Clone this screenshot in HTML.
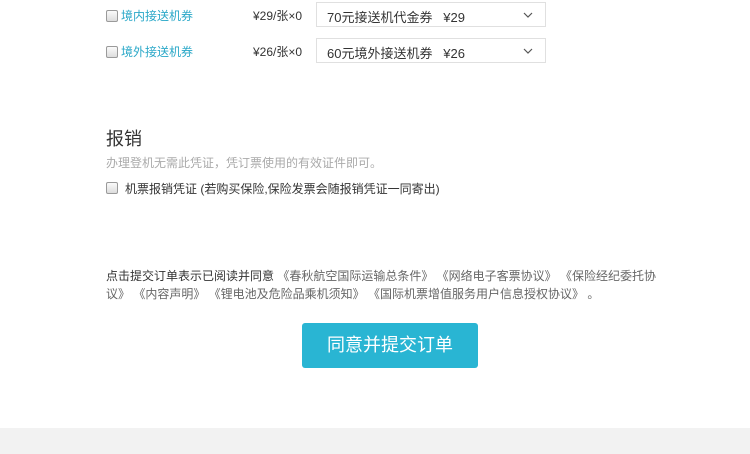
<!DOCTYPE html>
<html><head><meta charset="utf-8"><style>
*{margin:0;padding:0;box-sizing:border-box}
body{width:750px;height:454px;background:#fff;position:relative;overflow:hidden;font-family:"Liberation Sans","Noto Sans CJK SC",sans-serif;font-size:12px;color:#333}
.a{position:absolute;white-space:nowrap}
.cb{position:absolute;width:12px;height:12px;border:1px solid #9a9a9a;border-radius:2px;background:linear-gradient(#fafafa,#dcdcdc)}
.lbl{color:#2aa8c8}
.sel{position:absolute;width:230px;height:25px;border:1px solid #e0e0e0;background:#fff}
.sel span{position:absolute;left:10px;top:4px;font-size:13px;color:#333}
.sel svg{position:absolute;right:12px;top:9px}
</style></head><body>
<div class="cb" style="left:106px;top:10px"></div>
<div class="a lbl" style="left:121px;top:7px">境内接送机券</div>
<div class="a" style="left:253px;top:7px">¥29/张×0</div>
<div class="sel" style="left:316px;top:2px"><span>70元接送机代金券 &nbsp; ¥29</span><svg width="10" height="6"><path d="M1 1L5 5L9 1" stroke="#555" fill="none" stroke-width="1.2"/></svg></div>
<div class="cb" style="left:106px;top:46px"></div>
<div class="a lbl" style="left:121px;top:43px">境外接送机券</div>
<div class="a" style="left:253px;top:43px">¥26/张×0</div>
<div class="sel" style="left:316px;top:38px"><span>60元境外接送机券 &nbsp; ¥26</span><svg width="10" height="6"><path d="M1 1L5 5L9 1" stroke="#555" fill="none" stroke-width="1.2"/></svg></div>

<div class="a" style="left:106px;top:125px;font-size:18px;color:#333">报销</div>
<div class="a" style="left:106px;top:154px;color:#aaa">办理登机无需此凭证，凭订票使用的有效证件即可。</div>
<div class="cb" style="left:106px;top:182px"></div>
<div class="a" style="left:125px;top:180px">机票报销凭证 (若购买保险,保险发票会随报销凭证一同寄出)</div>

<div class="a" style="left:106px;top:267px;line-height:18px;white-space:normal;width:560px;color:#666"><span style="color:#333">点击提交订单表示已阅读并同意</span> 《春秋航空国际运输总条件》 《网络电子客票协议》 《保险经纪委托协议》 《内容声明》 《锂电池及危险品乘机须知》 《国际机票增值服务用户信息授权协议》 。</div>

<div class="a" style="left:302px;top:323px;width:176px;height:45px;background:#29b5d3;border-radius:3px;color:#fff;font-size:18px;text-align:center;line-height:45px">同意并提交订单</div>

<div class="a" style="left:0;top:428px;width:750px;height:26px;background:#f2f2f2"></div>
</body></html>
